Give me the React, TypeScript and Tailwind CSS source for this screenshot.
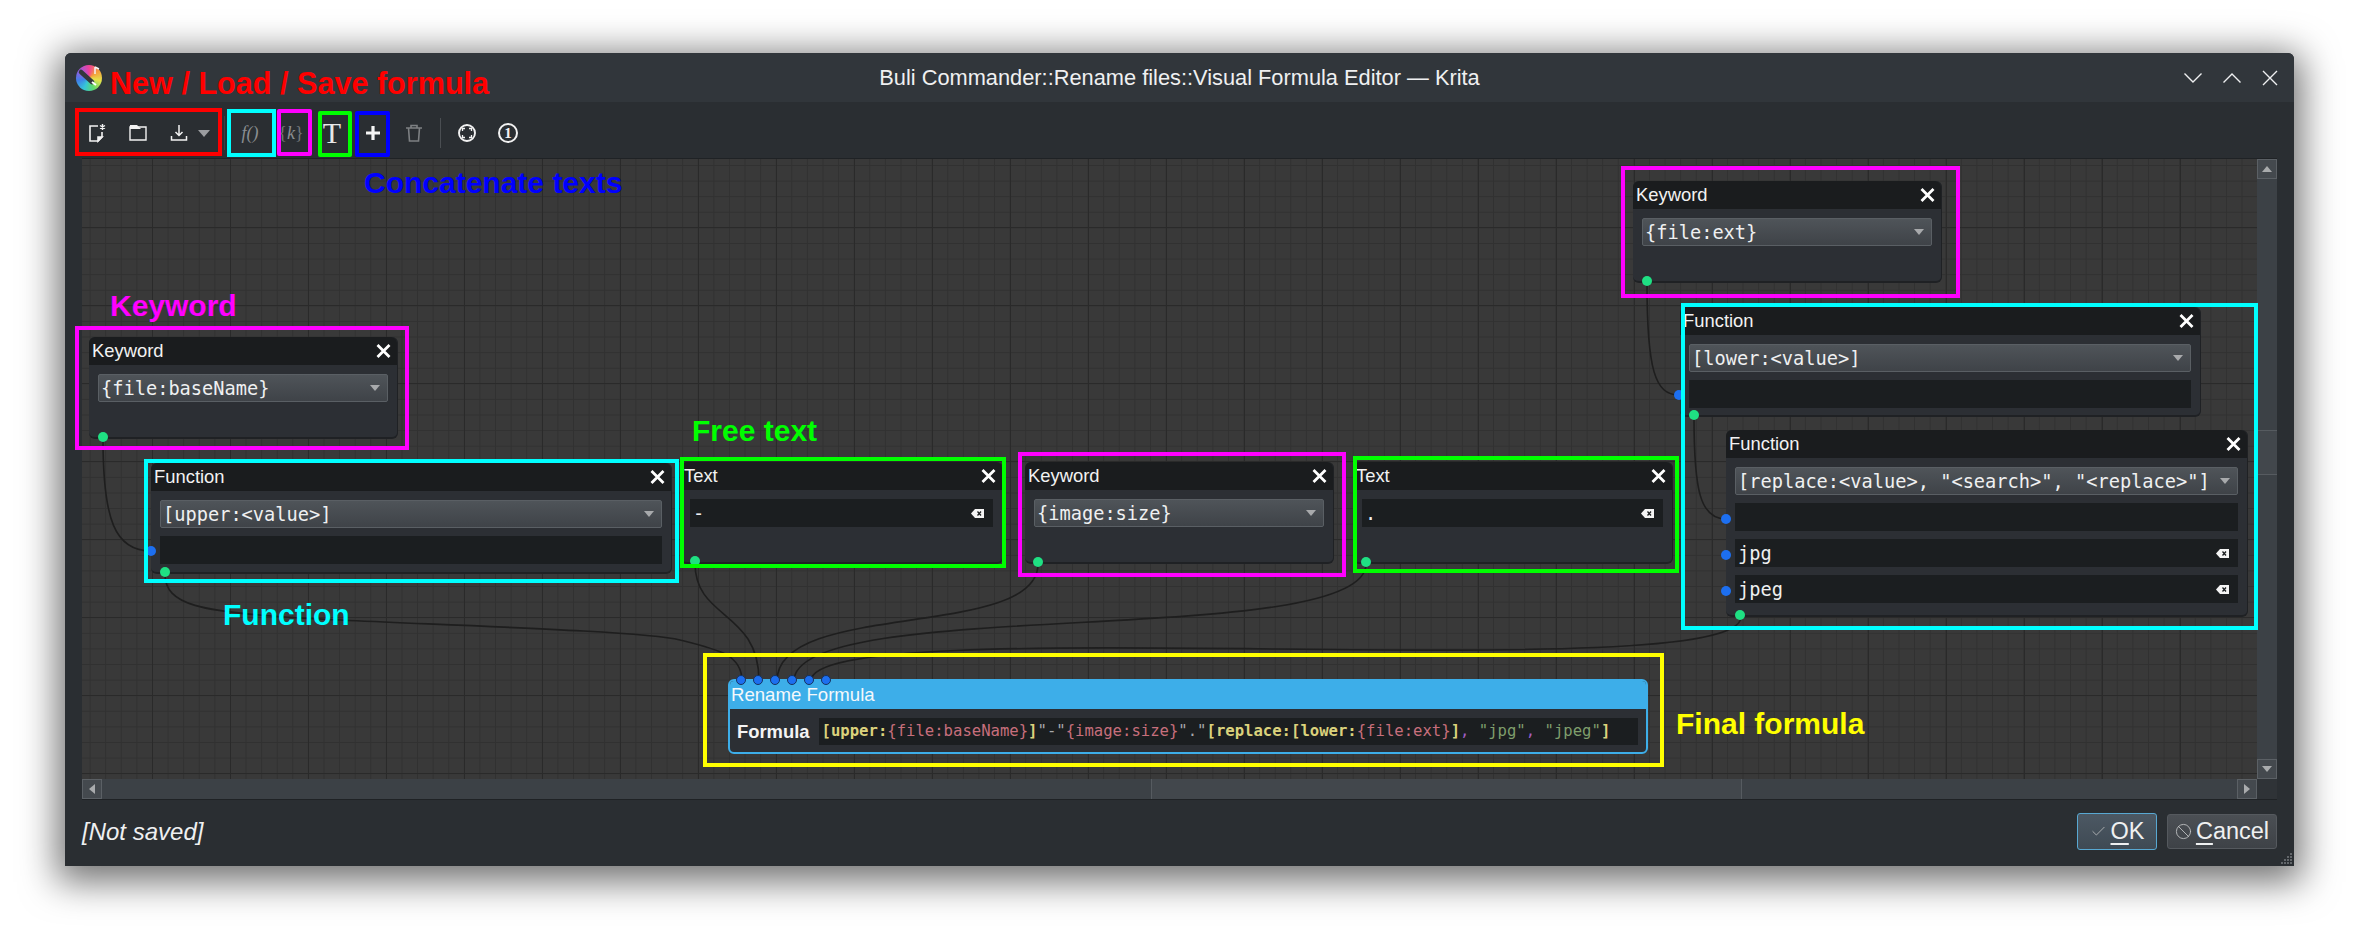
import React from 'react';
import { Ban, Check } from 'lucide-react';

const CloseX = () => (
  <svg width="15" height="14" viewBox="0 0 15 14" className="shrink-0">
    <path d="M1.5 1 L13.5 13 M13.5 1 L1.5 13" stroke="#ffffff" strokeWidth="2.8" fill="none" />
  </svg>
);

const Port = ({ className, color }: { className: string; color: 'in' | 'out' }) => (
  <div className={`absolute w-[10px] h-[10px] rounded-full ${color === 'in' ? 'bg-[#1d6ff0]' : 'bg-[#1fe083]'} ${className}`} />
);

const Combo = ({ label }: { label: string }) => (
  <div className="h-[28px] shrink-0 flex items-center justify-between pl-[2px] pr-[7px] rounded-[2px] border border-[#5a5f64] bg-gradient-to-b from-[#4f5459] to-[#3f4348] font-['DejaVu_Sans_Mono',monospace] text-[18.67px] text-[#eff0f1] whitespace-nowrap">
    <span className="pt-[2px]">{label}</span>
    <svg width="10" height="6" viewBox="0 0 10 6" className="shrink-0">
      <path d="M0 0 H10 L5 6 Z" fill="#a8aaac" />
    </svg>
  </div>
);

const Field = ({ value, clear }: { value?: string; clear?: boolean }) => (
  <div className="h-[28px] shrink-0 flex items-center justify-between pl-[3px] pr-[9px] bg-[#1b1e20] font-['DejaVu_Sans_Mono',monospace] text-[18.67px] text-[#eff0f1]">
    <span className="pt-[2px]">{value}</span>
    {clear && (
      <svg width="13" height="9" viewBox="0 0 13 9" className="shrink-0">
        <path d="M0 4.5 L4 0 H13 V9 H4 Z" fill="#f4f4f4" />
        <path d="M6.5 2.5 L10 6.5 M10 2.5 L6.5 6.5" stroke="#1b1e20" strokeWidth="1.3" />
      </svg>
    )}
  </div>
);

const NodeCard = ({ title, className, children }: { title: string; className: string; children: React.ReactNode }) => (
  <div className={`absolute rounded-[6px] bg-[#2c2f34] border-b-2 border-r border-[#1f2124] ${className}`}>
    <div className="h-[28px] flex items-center justify-between pl-[3px] pr-[6px] rounded-t-[6px] bg-[#1a1c1e] text-[18.4px] text-[#f2f2f2]">
      <span>{title}</span>
      <CloseX />
    </div>
    <div className="flex flex-col gap-[8px] pt-[9px] px-[9px]">{children}</div>
  </div>
);

const Wires = () => (
  <svg className="absolute inset-0 w-full h-full" viewBox="82 159 2175 620" fill="none" stroke="#1e1e1e" strokeWidth="1.6">
    <path d="M103 439 C103 520 115 551 151 551" />
    <path d="M165 574 C165 605 200 612 300 618 S640 630 680 640 S742 655 742 681" />
    <path d="M695 563 C695 620 759 610 759 681" />
    <path d="M1038 564 C1038 640 777 600 777 681" />
    <path d="M1366 564 C1366 650 794 595 794 681" />
    <path d="M1741 617 C1741 690 811 608 811 681" />
    <path d="M1647 283 C1647 370 1655 395 1679 395" />
    <path d="M1694 417 C1694 490 1700 519 1726 519" />
  </svg>
);

const Tool = ({ children, className = 'w-[41px]' }: { children: React.ReactNode; className?: string }) => (
  <div className={`h-[41px] flex items-center justify-center shrink-0 ${className}`}>{children}</div>
);

const Toolbar = () => (
  <div className="h-[56px] shrink-0 flex items-center pl-[11.5px] pt-[6px] bg-[#2a2e32]">
    <Tool>
      <svg width="20" height="20" viewBox="0 0 20 20" fill="none" stroke="#f2f2f2" strokeWidth="1.6">
        <path d="M11 3 H3 V18 H11 L15 14 V9" />
        <path d="M15 14 H11 V18 Z" fill="#f2f2f2" />
        <path d="M15.5 1 V7 M13 2.5 L18 5.5 M18 2.5 L13 5.5" strokeWidth="1.4" />
      </svg>
    </Tool>
    <Tool>
      <svg width="20" height="20" viewBox="0 0 20 20" fill="none" stroke="#f2f2f2" strokeWidth="1.4">
        <path d="M2 4 H18 V17 H2 Z" />
        <path d="M2 2 H9 L13 6 H2 Z" fill="#f2f2f2" stroke="none" />
      </svg>
    </Tool>
    <Tool className="w-[41px]">
      <svg width="20" height="20" viewBox="0 0 20 20" fill="none" stroke="#f2f2f2" strokeWidth="1.5">
        <path d="M10 2 V12 M6.5 9 L10 12.5 L13.5 9" />
        <path d="M2.5 13 V17 H17.5 V13" />
      </svg>
    </Tool>
    <svg width="14" height="7" viewBox="0 0 14 7" className="shrink-0 ml-[-3px]">
      <path d="M1 0 H13 L7 7 Z" fill="#9b9da0" />
    </svg>
    <div className="w-px h-[34px] bg-[#3a3f44] ml-[13px] mr-[5px] shrink-0" />
    <Tool>
      <span className="font-['Liberation_Serif',serif] italic text-[18px] text-[#8b8e91]">f()</span>
    </Tool>
    <Tool>
      <span className="font-['Liberation_Serif',serif] text-[18px] text-[#74777a]">
        {'{'}
        <span className="italic text-[#8b8e91]">k</span>
        {'}'}
      </span>
    </Tool>
    <Tool>
      <span className="font-['Liberation_Serif',serif] text-[30px] leading-none text-[#e8e8e8]">T</span>
    </Tool>
    <Tool>
      <svg width="18" height="18" viewBox="0 0 18 18">
        <path d="M9 2 V16 M2 9 H16" stroke="#f5f5f5" strokeWidth="3.2" />
      </svg>
    </Tool>
    <Tool>
      <svg width="20" height="20" viewBox="0 0 20 20" fill="none" stroke="#7d8083" strokeWidth="1.6">
        <path d="M2 5 H18 M7 5 V2.5 H13 V5" />
        <path d="M4.5 5 L5.5 18 H14.5 L15.5 5" />
      </svg>
    </Tool>
    <div className="w-px h-[30px] bg-[#4a4e52] ml-[5px] mr-[6px] shrink-0" />
    <Tool>
      <svg width="20" height="20" viewBox="0 0 20 20" fill="none" stroke="#f2f2f2" strokeWidth="1.9">
        <circle cx="10" cy="10" r="8" />
        <path d="M5.5 8 V5.5 H8 M12 5.5 H14.5 V8 M14.5 12 V14.5 H12 M8 14.5 H5.5 V12" strokeWidth="1.3" />
      </svg>
    </Tool>
    <Tool>
      <div className="w-[20px] h-[20px] rounded-full border-2 border-[#f2f2f2] flex items-center justify-center font-['Liberation_Serif',serif] font-bold text-[15px] leading-none text-[#f2f2f2]">
        1
      </div>
    </Tool>
  </div>
);

const TitleBar = () => (
  <div className="h-[49px] shrink-0 grid grid-cols-[1fr_auto_1fr] items-center rounded-t-[6px] bg-[#31363b]">
    <div className="pl-[11px]">
      <div className="relative w-[26px] h-[26px] rounded-full bg-[conic-gradient(#f0409a,#f59a3c,#e6e24a,#5fd96a,#35c6d8,#3f7fe8,#9a5be0,#f0409a)]">
        <svg width="26" height="26" viewBox="0 0 26 26" className="absolute inset-0">
          <path d="M5 7 L16 17" stroke="#33373c" strokeWidth="4.5" strokeLinecap="round" />
          <path d="M16 17 L20 20" stroke="#ffffff" strokeWidth="2" />
          <path d="M19 2 V9 M19 2 L23 4" stroke="#f4f4f4" strokeWidth="1.5" fill="none" />
        </svg>
      </div>
    </div>
    <div className="pt-[1px] text-[21.8px] text-[#eff0f1] whitespace-nowrap">Buli Commander::Rename files::Visual Formula Editor — Krita</div>
    <div className="flex items-center justify-end pr-[16px] gap-[21px]">
      <svg width="18" height="10" viewBox="0 0 18 10" fill="none" stroke="#eff0f1" strokeWidth="1.4">
        <path d="M0.5 0.5 L9 9 L17.5 0.5" />
      </svg>
      <svg width="18" height="10" viewBox="0 0 18 10" fill="none" stroke="#eff0f1" strokeWidth="1.4">
        <path d="M0.5 9.5 L9 1 L17.5 9.5" />
      </svg>
      <svg width="16" height="16" viewBox="0 0 16 16" fill="none" stroke="#eff0f1" strokeWidth="1.4">
        <path d="M1 1 L15 15 M15 1 L1 15" />
      </svg>
    </div>
  </div>
);

const ScrollButton = ({ d }: { d: string }) => (
  <div className="w-[20px] h-[20px] shrink-0 flex items-center justify-center bg-[#44494e] border border-[#5b6065]">
    <svg width="12" height="12" viewBox="0 0 12 12">
      <path d={d} fill="#a9abad" />
    </svg>
  </div>
);

const Canvas = () => (
  <div className="relative flex-1 overflow-hidden border-t border-[#1f2225] bg-[#393939] bg-[linear-gradient(to_right,#2a2a2a_1px,transparent_1px),linear-gradient(to_bottom,#2a2a2a_1px,transparent_1px),linear-gradient(to_right,#313131_1px,transparent_1px),linear-gradient(to_bottom,#313131_1px,transparent_1px)] bg-size-[78px_78px,78px_78px,15.6px_15.6px,15.6px_15.6px] bg-position-[70px_0,0_68px,7.6px_0,0_6px]">
    <Wires />

    <NodeCard title="Keyword" className="left-[7px] top-[178px] w-[309px] h-[102px]">
      <Combo label="{file:baseName}" />
      <Port color="out" className="left-[9px] bottom-[-5px]" />
    </NodeCard>

    <NodeCard title="Function" className="left-[69px] top-[304px] w-[521px] h-[111px]">
      <Combo label="[upper:<value>]" />
      <Field />
      <Port color="in" className="left-[-5px] top-[83px]" />
      <Port color="out" className="left-[9px] bottom-[-5px]" />
    </NodeCard>

    <NodeCard title="Text" className="left-[599px] top-[303px] w-[322px] h-[102px]">
      <Field value="-" clear />
      <Port color="out" className="left-[9px] bottom-[-4px]" />
    </NodeCard>

    <NodeCard title="Keyword" className="left-[943px] top-[303px] w-[309px] h-[102px]">
      <Combo label="{image:size}" />
      <Port color="out" className="left-[8px] bottom-[-5px]" />
    </NodeCard>

    <NodeCard title="Text" className="left-[1271px] top-[303px] w-[320px] h-[102px]">
      <Field value="." clear />
      <Port color="out" className="left-[8px] bottom-[-5px]" />
    </NodeCard>

    <NodeCard title="Keyword" className="left-[1551px] top-[22px] w-[309px] h-[102px]">
      <Combo label="{file:ext}" />
      <Port color="out" className="left-[9px] bottom-[-5px]" />
    </NodeCard>

    <NodeCard title="Function" className="left-[1598px] top-[148px] w-[521px] h-[110px]">
      <Combo label="[lower:<value>]" />
      <Field />
      <Port color="in" className="left-[-6px] top-[83px]" />
      <Port color="out" className="left-[9px] bottom-[-5px]" />
    </NodeCard>

    <NodeCard title="Function" className="left-[1644px] top-[271px] w-[522px] h-[187px]">
      <Combo label={'[replace:<value>, "<search>", "<replace>"]'} />
      <Field />
      <Field value="jpg" clear />
      <Field value="jpeg" clear />
      <Port color="in" className="left-[-5px] top-[84px]" />
      <Port color="in" className="left-[-5px] top-[120px]" />
      <Port color="in" className="left-[-5px] top-[156px]" />
      <Port color="out" className="left-[9px] bottom-[-5px]" />
    </NodeCard>

    <div className="absolute left-[646px] top-[520px] w-[920px] h-[75px] rounded-[6px] border-2 border-[#3daee9] bg-[#2c2f34]">
      <div className="h-[28px] flex items-center pl-[1px] rounded-t-[4px] bg-[#3daee9] text-[18.6px] text-[#f4f8fb]">Rename Formula</div>
      <div className="flex items-center gap-[9px] pt-[9px] pl-[7px] pr-[8px]">
        <span className="font-bold text-[18.4px] text-[#f4f4f4]">Formula</span>
        <div className="flex-1 h-[27px] flex items-center pl-[3px] bg-[#1b1e20] font-['DejaVu_Sans_Mono',monospace] text-[15.6px] whitespace-nowrap text-[#a7a9ab]">
          <span className="font-bold text-[#dbd27c]">[upper:</span>
          <span className="text-[#c76f7c]">{'{file:baseName}'}</span>
          <span className="font-bold text-[#dbd27c]">]</span>
          <span>"-"</span>
          <span className="text-[#c76f7c]">{'{image:size}'}</span>
          <span>"."</span>
          <span className="font-bold text-[#dbd27c]">[replace:[lower:</span>
          <span className="text-[#c76f7c]">{'{file:ext}'}</span>
          <span className="font-bold text-[#dbd27c]">]</span>
          <span className="text-[#a25fc4] whitespace-pre">, </span>
          <span className="text-[#7f9f6c]">"jpg"</span>
          <span className="text-[#a25fc4] whitespace-pre">, </span>
          <span className="text-[#7f9f6c]">"jpeg"</span>
          <span className="font-bold text-[#dbd27c]">]</span>
        </div>
      </div>
      <Port color="in" className="left-[6px] top-[-6px] border border-[#17325e]" />
      <Port color="in" className="left-[23px] top-[-6px] border border-[#17325e]" />
      <Port color="in" className="left-[40px] top-[-6px] border border-[#17325e]" />
      <Port color="in" className="left-[57px] top-[-6px] border border-[#17325e]" />
      <Port color="in" className="left-[74px] top-[-6px] border border-[#17325e]" />
      <Port color="in" className="left-[91px] top-[-6px] border border-[#17325e]" />
    </div>
  </div>
);

const Footer = () => (
  <div className="flex-1 flex items-center justify-between pr-[17px] pb-[3px] pl-[17px]">
    <span className="italic text-[24px] text-[#eff0f1]">[Not saved]</span>
    <div className="flex items-center gap-[10px]">
      <div className="w-[80px] h-[37px] flex items-center justify-center gap-[4px] rounded-[3px] border border-[#58a8d2] bg-gradient-to-b from-[#4c5863] to-[#3f4a54] text-[23.5px] text-[#eff0f1]">
        <Check size={17} strokeWidth={1.2} color="#b8babc" />
        <span>
          <span className="underline decoration-2 underline-offset-[4px]">O</span>K
        </span>
      </div>
      <div className="w-[110px] h-[35px] flex items-center justify-center gap-[4px] rounded-[3px] border border-[#55595e] bg-gradient-to-b from-[#4b4f54] to-[#3e4247] text-[23.5px] text-[#eff0f1]">
        <Ban size={17} strokeWidth={1.2} color="#c4c6c8" />
        <span>
          <span className="underline decoration-2 underline-offset-[4px]">C</span>ancel
        </span>
      </div>
    </div>
  </div>
);

// annotations painted over the screenshot, page coordinates
const Annotations = () => (
  <>
    <div className="absolute left-[75px] top-[108px] w-[147px] h-[48px] border-4 border-[#ff0000]" />
    <div className="absolute left-[227px] top-[109px] w-[49px] h-[48px] border-4 border-[#00ffff]" />
    <div className="absolute left-[277px] top-[109px] w-[35px] h-[47px] rounded-[2px] border-4 border-[#ff00ff]" />
    <div className="absolute left-[318px] top-[111px] w-[34px] h-[46px] rounded-[2px] border-4 border-[#00ff00]" />
    <div className="absolute left-[355px] top-[111px] w-[35px] h-[46px] rounded-[2px] border-4 border-[#0000ff]" />
    <div className="absolute left-[75px] top-[326px] w-[334px] h-[124px] border-4 border-[#ff00ff]" />
    <div className="absolute left-[144px] top-[459px] w-[535px] h-[124px] border-4 border-[#00ffff]" />
    <div className="absolute left-[680px] top-[457px] w-[326px] h-[111px] border-4 border-[#00ff00]" />
    <div className="absolute left-[1018px] top-[452px] w-[328px] h-[125px] border-4 border-[#ff00ff]" />
    <div className="absolute left-[1353px] top-[456px] w-[326px] h-[117px] border-4 border-[#00ff00]" />
    <div className="absolute left-[1621px] top-[166px] w-[339px] h-[132px] border-4 border-[#ff00ff]" />
    <div className="absolute left-[1681px] top-[303px] w-[577px] h-[327px] border-4 border-[#00ffff]" />
    <div className="absolute left-[703px] top-[653px] w-[961px] h-[114px] border-4 border-[#ffff00]" />

    <div className="absolute left-[110px] top-[68px] text-[30.6px] leading-none font-bold text-[#ff0000] whitespace-nowrap">New / Load / Save formula</div>
    <div className="absolute left-[364px] top-[168px] text-[30px] leading-none font-bold text-[#0000ff] whitespace-nowrap">Concatenate texts</div>
    <div className="absolute left-[110px] top-[291px] text-[30px] leading-none font-bold text-[#ff00ff]">Keyword</div>
    <div className="absolute left-[223px] top-[600px] text-[30px] leading-none font-bold text-[#00ffff]">Function</div>
    <div className="absolute left-[692px] top-[416px] text-[30px] leading-none font-bold text-[#00ff00] whitespace-nowrap">Free text</div>
    <div className="absolute left-[1676px] top-[709px] text-[30px] leading-none font-bold text-[#ffff00] whitespace-nowrap">Final formula</div>
  </>
);

export default function App() {
  return (
    <div className="relative w-[2359px] h-[943px] overflow-hidden bg-white pt-[53px] pl-[65px] font-['Liberation_Sans',Arial,sans-serif]">
      <div className="relative w-[2229px] h-[813px] flex flex-col rounded-t-[6px] bg-[#2a2e32] shadow-[0_8px_36px_8px_rgba(0,0,0,0.55)]">
        <TitleBar />
        <Toolbar />

        <div className="flex h-[621px] shrink-0 pl-[17px] pr-[17px]">
          <Canvas />
          <div className="w-[20px] shrink-0 flex flex-col border-t border-[#1f2225] bg-[#3c4146]">
            <ScrollButton d="M1 9 H11 L6 3 Z" />
            <div className="flex-1 pt-[251px]">
              <div className="h-[45px] bg-[#42474c] border-y border-[#565b60]" />
            </div>
            <ScrollButton d="M1 3 H11 L6 9 Z" />
          </div>
        </div>

        <div className="flex h-[21px] shrink-0 pl-[17px] pr-[17px]">
          <div className="flex-1 flex bg-[#3c4146] border-b border-[#1f2225]">
            <ScrollButton d="M9 1 V11 L3 6 Z" />
            <div className="flex-1 pl-[1049px]">
              <div className="w-[591px] h-full bg-[#42474c] border-x border-[#565b60]" />
            </div>
            <ScrollButton d="M3 1 V11 L9 6 Z" />
          </div>
          <div className="w-[20px] shrink-0 bg-[#2f3337] border-b border-[#1f2225]" />
        </div>

        <Footer />

        <svg width="12" height="12" viewBox="0 0 12 12" className="absolute right-[1px] bottom-[1px]" fill="#62666a">
          <rect x="9" y="0" width="2" height="2" />
          <rect x="6" y="3" width="2" height="2" />
          <rect x="9" y="3" width="2" height="2" />
          <rect x="3" y="6" width="2" height="2" />
          <rect x="6" y="6" width="2" height="2" />
          <rect x="9" y="6" width="2" height="2" />
          <rect x="0" y="9" width="2" height="2" />
          <rect x="3" y="9" width="2" height="2" />
          <rect x="6" y="9" width="2" height="2" />
          <rect x="9" y="9" width="2" height="2" />
        </svg>
      </div>
      <Annotations />
    </div>
  );
}
